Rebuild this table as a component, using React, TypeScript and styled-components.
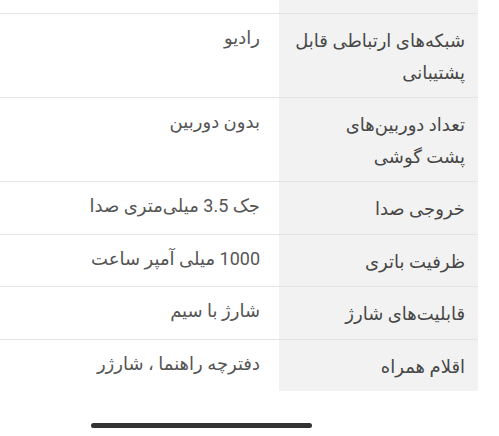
import React from "react";
import styled, { createGlobalStyle } from "styled-components";

const GlobalStyle = createGlobalStyle`
  html, body {
    margin: 0;
    padding: 0;
    background: #ffffff;
  }
  body {
    font-family: Roboto, "DejaVu Sans", sans-serif;
  }
`;

const Page = styled.div`
  width: 499px;
  height: 436px;
  overflow: hidden;
  background: #ffffff;
`;

const Table = styled.div`
  width: 478px;
  direction: rtl;
  display: flex;
  flex-direction: column;
`;

const Row = styled.div<{ $last?: boolean }>`
  display: flex;
  border-bottom: ${(p) => (p.$last ? "none" : "1px solid #e4e4e4")};
`;

const Label = styled.div<{ $spacer?: boolean }>`
  width: 199px;
  flex-shrink: 0;
  box-sizing: border-box;
  background: #f2f2f2;
  padding: ${(p) => (p.$spacer ? "0" : "11px 13px 9px 8px")};
  height: ${(p) => (p.$spacer ? "13px" : "auto")};
  font-size: 18px;
  line-height: 31.5px;
  color: #474747;
`;

const Value = styled.div`
  flex: 1;
  padding: 8px 19px 10px 10px;
  font-size: 18px;
  line-height: 31.5px;
  color: #555555;
`;

const HomeBar = styled.div`
  width: 221px;
  height: 5px;
  border-radius: 3px;
  background: #333333;
  margin: 32px 0 0 91px;
`;

const specs = [
  { label: ["شبکه‌های ارتباطی قابل", "پشتیبانی"], value: "رادیو" },
  { label: ["تعداد دوربین‌های", "پشت گوشی"], value: "بدون دوربین" },
  { label: ["خروجی صدا"], value: "جک 3.5 میلی‌متری صدا" },
  { label: ["ظرفیت باتری"], value: "1000 میلی آمپر ساعت" },
  { label: ["قابلیت‌های شارژ"], value: "شارژ با سیم" },
  { label: ["اقلام همراه"], value: "دفترچه راهنما ، شارژر" },
];

export default function App() {
  return (
    <Page>
      <GlobalStyle />
      <Table>
        <Row>
          <Label $spacer />
          <Value style={{ padding: 0 }} />
        </Row>
        {specs.map((s, i) => (
          <Row key={s.value} $last={i === specs.length - 1}>
            <Label>
              {s.label.map((line, j) => (
                <React.Fragment key={line}>
                  {j > 0 && <br />}
                  {line}
                </React.Fragment>
              ))}
            </Label>
            <Value>{s.value}</Value>
          </Row>
        ))}
      </Table>
      <HomeBar />
    </Page>
  );
}
